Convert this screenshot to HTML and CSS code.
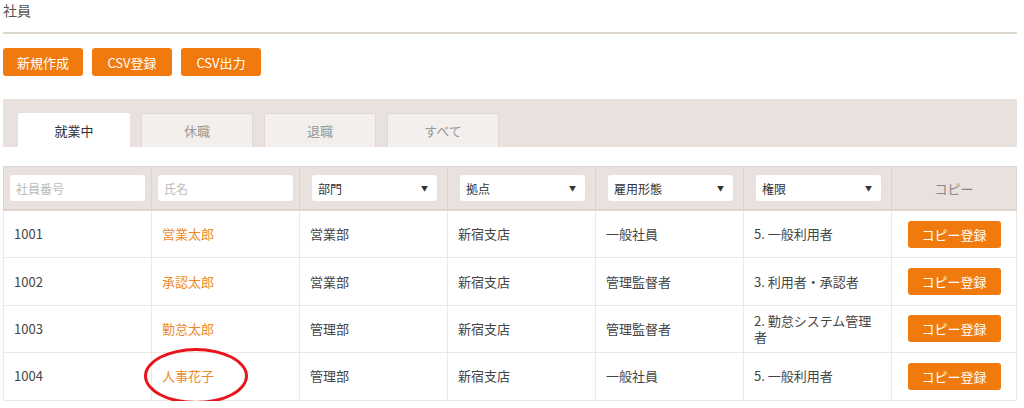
FILE: index.html
```html
<!DOCTYPE html>
<html lang="ja">
<head>
  <meta charset="UTF-8" />
  <title>社員</title>
  <link rel="stylesheet" href="styles.css">
</head>
<body>
  <div class="page">
    <h1 class="page-title">社員</h1>

    <div class="toolbar">
      <button class="btn">新規作成</button>
      <button class="btn">CSV登録</button>
      <button class="btn">CSV出力</button>
    </div>

    <div class="tabs">
      <div class="tab active">就業中</div>
      <div class="tab">休職</div>
      <div class="tab">退職</div>
      <div class="tab">すべて</div>
    </div>

    <table class="staff">
      <thead>
        <tr>
          <th><input class="filter" placeholder="社員番号"></th>
          <th><input class="filter" placeholder="氏名"></th>
          <th><div class="select">部門<span class="arrow">▼</span></div></th>
          <th><div class="select">拠点<span class="arrow">▼</span></div></th>
          <th><div class="select">雇用形態<span class="arrow">▼</span></div></th>
          <th><div class="select">権限<span class="arrow">▼</span></div></th>
          <th class="copy-head">コピー</th>
        </tr>
      </thead>
      <tbody>
        <tr>
          <td>1001</td>
          <td><a class="name">営業太郎</a></td>
          <td>営業部</td>
          <td>新宿支店</td>
          <td>一般社員</td>
          <td>5. 一般利用者</td>
          <td class="copy-cell"><button class="btn copy">コピー登録</button></td>
        </tr>
        <tr>
          <td>1002</td>
          <td><a class="name">承認太郎</a></td>
          <td>営業部</td>
          <td>新宿支店</td>
          <td>管理監督者</td>
          <td>3. 利用者・承認者</td>
          <td class="copy-cell"><button class="btn copy">コピー登録</button></td>
        </tr>
        <tr>
          <td>1003</td>
          <td><a class="name">勤怠太郎</a></td>
          <td>管理部</td>
          <td>新宿支店</td>
          <td>管理監督者</td>
          <td>2. 勤怠システム管理者</td>
          <td class="copy-cell"><button class="btn copy">コピー登録</button></td>
        </tr>
        <tr>
          <td>1004</td>
          <td class="marked"><a class="name">人事花子</a><span class="circle"></span></td>
          <td>管理部</td>
          <td>新宿支店</td>
          <td>一般社員</td>
          <td>5. 一般利用者</td>
          <td class="copy-cell"><button class="btn copy">コピー登録</button></td>
        </tr>
      </tbody>
    </table>
  </div>
</body>
</html>
```

FILE: styles.css
```css
:root {
  --orange: #f07a0e;
  --name-color: #f0892c;
  --beige: #e8e1dd;
  --line: #ddd5cf;
  --text: #444;
}
body {
  margin: 0;
  font-family: "Noto Sans CJK JP", "Liberation Sans", sans-serif;
  font-size: 13px;
  color: var(--text);
  background: #fff;
}
.page {
  width: 1014px;
  padding: 0 0 0 3px;
}
.page-title {
  margin: 0;
  padding: 1px 0 0;
  font-size: 14px;
  font-weight: normal;
  line-height: 18px;
  color: #555;
  border-bottom: 2px solid #ddd6cc;
  padding-bottom: 13px;
}
.toolbar {
  display: flex;
  gap: 9px;
  margin-top: 14px;
}
.btn {
  background: var(--orange);
  color: #fff;
  border: none;
  border-radius: 3px;
  font-family: inherit;
  font-size: 13px;
  height: 28px;
  width: 80px;
  padding: 0;
  cursor: pointer;
}
.tabs {
  display: flex;
  gap: 11px;
  margin-top: 23px;
  padding: 14px 15px 0;
  background: var(--beige);
  height: 34px;
}
.tab {
  width: 110px;
  height: 33px;
  line-height: 33px;
  text-align: center;
  background: #f3efed;
  border: 1px solid #e0d9d3;
  border-bottom: none;
  border-radius: 2px 2px 0 0;
  color: #999;
}
.tab.active {
  background: #fff;
  border-color: #fff;
  color: #333;
}
.staff {
  width: 1014px;
  margin-top: 19px;
  border-collapse: collapse;
  table-layout: fixed;
}
.staff th {
  background: var(--beige);
  border: 1px solid var(--line);
  border-bottom: 2px solid var(--line);
  height: 42px;
  padding: 0 6px;
  font-weight: normal;
}
.staff th:nth-child(-n+6) {
  width: 135px;
}
.staff td {
  border: 1px solid #eee7e3;
  height: 46.4px;
  padding: 0 10px;
  line-height: 16px;
}
.filter {
  display: block;
  width: 100%;
  box-sizing: border-box;
  height: 26px;
  border: none;
  border-radius: 3px;
  padding: 0 6px;
  font-family: inherit;
  font-size: 12px;
  color: #555;
}
.filter::placeholder {
  color: #bbb;
}
.select {
  display: flex;
  justify-content: space-between;
  align-items: center;
  height: 26px;
  margin: 0 4px 0 6px;
  padding: 0 9px 0 6px;
  background: #fff;
  border-radius: 3px;
  font-size: 12px;
  color: #333;
  text-align: left;
}
.arrow {
  font-size: 7px;
}
.copy-head {
  color: #888;
  font-size: 13px;
}
.copy-cell {
  text-align: center;
}
.btn.copy {
  width: 93px;
  height: 27px;
}
.name {
  color: var(--name-color);
  cursor: pointer;
}
.marked {
  position: relative;
}
.circle {
  position: absolute;
  left: -8px;
  top: -5px;
  width: 98px;
  height: 50px;
  border: 3px solid #e8141c;
  border-radius: 50%;
}
```
